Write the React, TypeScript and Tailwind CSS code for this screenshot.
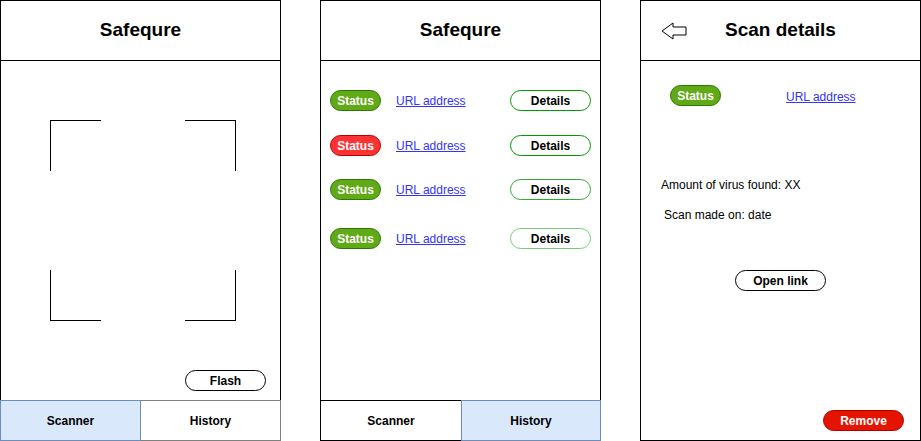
import React from 'react';

const font = { fontFamily: '"Liberation Sans", Arial, sans-serif' };

function Header({ title, back }: { title: string; back?: boolean }) {
  return (
    <div className="h-[61px] border border-black flex items-center shrink-0">
      <div className="w-[46px] pl-[20px] flex items-center">
        {back && (
          <svg width="26" height="18" viewBox="0 0 26 18">
            <polygon
              points="1,9 12,1 12,5 25,5 25,13 12,13 12,17"
              fill="white"
              stroke="black"
              strokeWidth="1"
            />
          </svg>
        )}
      </div>
      <div className="flex-1 text-center text-[19px] font-bold text-black">{title}</div>
      <div className="w-[46px]" />
    </div>
  );
}

function TabBar({ active }: { active: 'scanner' | 'history' }) {
  const on = 'bg-[#dae8fc] border border-[#6c8ebf]';
  return (
    <div className="h-[41px] flex shrink-0 text-[12px] font-bold text-black">
      {active === 'scanner' ? (
        <>
          <div className={`w-[141px] flex items-center justify-center ${on}`}>Scanner</div>
          <div className="w-[140px] flex items-center justify-center border-y border-r border-[#808080]">History</div>
        </>
      ) : (
        <>
          <div className="w-[141px] flex items-center justify-center border border-black border-r-0">Scanner</div>
          <div className={`w-[140px] flex items-center justify-center ${on}`}>History</div>
        </>
      )}
    </div>
  );
}

function StatusPill({ red }: { red?: boolean }) {
  return (
    <div
      className={`w-[51px] h-[21px] rounded-full border flex items-center justify-center text-[12px] font-bold text-white ${
        red ? 'bg-[#ff3333] border-[#b20000]' : 'bg-[#60a917] border-[#2d7600]'
      }`}
    >
      Status
    </div>
  );
}

function Url() {
  return <span className="text-[12px] text-[#3333ff] underline leading-[14px]">URL address</span>;
}

function Corner({ cls }: { cls: string }) {
  return <div className={`w-[51px] h-[51px] border-black ${cls}`} />;
}

function ScannerScreen() {
  return (
    <div className="w-[281px] h-[441px] flex flex-col shrink-0">
      <Header title="Safequre" />
      <div className="flex-1 border-x border-black flex flex-col">
        <div className="mt-[59px] ml-[49px] w-[186px] h-[201px] flex flex-col justify-between">
          <div className="flex justify-between">
            <Corner cls="border-t border-l" />
            <Corner cls="border-t border-r" />
          </div>
          <div className="flex justify-between">
            <Corner cls="border-b border-l" />
            <Corner cls="border-b border-r" />
          </div>
        </div>
        <div className="mt-[49px] self-end mr-[14px] w-[81px] h-[21px] rounded-full border border-black flex items-center justify-center text-[12px] font-bold">
          Flash
        </div>
      </div>
      <TabBar active="scanner" />
    </div>
  );
}

const rows = [
  { mt: 'mt-[29px]', red: false, border: 'border-[#009900]' },
  { mt: 'mt-[24px]', red: true, border: 'border-[#009900]' },
  { mt: 'mt-[23px]', red: false, border: 'border-[#33aa33]' },
  { mt: 'mt-[28px]', red: false, border: 'border-[#77cc77]' },
];

function HistoryScreen() {
  return (
    <div className="w-[281px] h-[441px] flex flex-col shrink-0">
      <Header title="Safequre" />
      <div className="flex-1 border-x border-black flex flex-col">
        {rows.map((r, i) => (
          <div key={i} className={`${r.mt} pl-[9px] pr-[9px] flex items-center`}>
            <StatusPill red={r.red} />
            <div className="ml-[15px] text-[12px] leading-[14px] pt-[1px]">
              <Url />
            </div>
            <div
              className={`ml-auto w-[81px] h-[21px] rounded-full border ${r.border} flex items-center justify-center text-[12px] font-bold text-black`}
            >
              Details
            </div>
          </div>
        ))}
      </div>
      <TabBar active="history" />
    </div>
  );
}

function DetailsScreen() {
  return (
    <div className="w-[281px] h-[441px] flex flex-col shrink-0">
      <Header title="Scan details" back />
      <div className="flex-1 border-x border-b border-black flex flex-col text-[12px] text-black">
        <div className="mt-[24px] pl-[29px] flex items-center">
          <StatusPill />
          <div className="ml-[65px] pt-[2px] leading-[14px]">
            <Url />
          </div>
        </div>
        <div className="mt-[72px] pl-[20px] leading-[14px]">Amount of virus found: XX</div>
        <div className="mt-[16px] pl-[23px] leading-[14px]">Scan made on: date</div>
        <div className="mt-[48px] self-center w-[91px] h-[21px] rounded-full border border-black flex items-center justify-center font-bold">
          Open link
        </div>
        <div className="mt-auto mb-[9px] self-end mr-[16px] w-[81px] h-[21px] rounded-full border border-[#b20000] bg-[#e51400] flex items-center justify-center font-bold text-white">
          Remove
        </div>
      </div>
    </div>
  );
}

export default function App() {
  return (
    <div className="w-[921px] h-[441px] bg-white flex gap-[39px] overflow-hidden" style={font}>
      <ScannerScreen />
      <HistoryScreen />
      <DetailsScreen />
    </div>
  );
}
